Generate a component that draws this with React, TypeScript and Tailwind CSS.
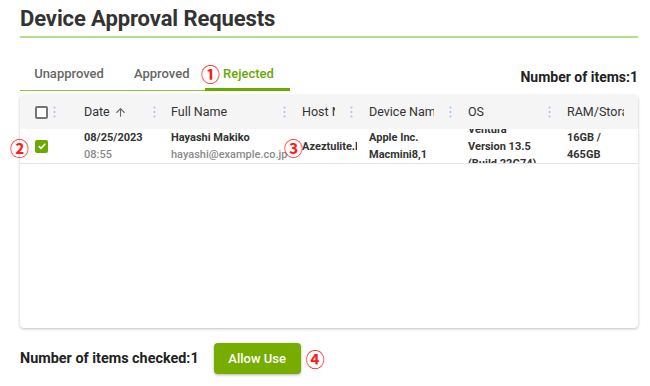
import React from "react";
import { ArrowUp } from "lucide-react";

const Dots = () => (
  <svg width="3" height="12" viewBox="0 0 3 12" className="shrink-0">
    <circle cx="1.5" cy="1.5" r="1" fill="#9cc3ea" />
    <circle cx="1.5" cy="6" r="1" fill="#9cc3ea" />
    <circle cx="1.5" cy="10.5" r="1" fill="#9cc3ea" />
  </svg>
);

const Mark = ({ n, className = "" }: { n: string; className?: string }) => (
  <span
    className={`text-[19px] font-bold leading-none text-[#ff1a1a] ${className}`}
    style={{ fontFamily: '"Noto Sans CJK JP", sans-serif' }}
  >
    {n}
  </span>
);

const HeadCell = ({
  w,
  pl,
  children,
  dots = true,
}: {
  w: string;
  pl: string;
  children: React.ReactNode;
  dots?: boolean;
}) => (
  <div className={`${w} ${pl} flex h-full min-w-0 items-center pr-[5px]`}>
    <div className={`flex min-w-0 flex-1 items-center overflow-hidden whitespace-nowrap ${dots ? "mr-[15px]" : "mr-[9px]"}`}>
      {children}
    </div>
    {dots && <Dots />}
  </div>
);

export default function App() {
  return (
    <div
      className="w-[650px] h-[386px] bg-white pl-[20px] pr-[12px] text-[#333]"
      style={{ fontFamily: "Roboto, sans-serif" }}
    >
      <div className="border-b-2 border-[#b7dc8e] pt-[6px] pb-[4px]">
        <h1 className="text-[22px] font-bold leading-[26px] tracking-[-0.1px] text-[#333]">Device Approval Requests</h1>
      </div>

      <div className="mt-[19px] flex items-end justify-between">
        <div className="flex h-[34px] w-[270px] items-stretch border-b border-[#8cc43c] text-[13px] font-medium">
          <div className="flex w-[100px] items-center justify-center pr-[2px] text-[#666]">Unapproved</div>
          <div className="flex w-[72px] items-center pl-[14px] text-[#666]">Approved</div>
          <div className="relative flex flex-1 items-center pl-[9px] text-[#6aaa00]">
            <Mark n="①" className="mr-[3px]" />
            Rejected
            <div className="absolute bottom-[-1px] left-[13px] right-0 h-[3px] bg-[#6aaa00]" />
          </div>
        </div>
        <div className="mb-[3px] text-[14px] font-bold text-[#222]">Number of items:1</div>
      </div>

      <div className="relative mt-[4px] h-[233px] rounded-[4px] bg-white shadow-[0_1px_3px_rgba(0,0,0,0.25)]">
        <div className="flex h-[34px] items-center overflow-hidden rounded-t-[4px] bg-[#f5f5f5] text-[12.5px] text-[#333]">
          <div className="flex h-full w-[41px] shrink-0 items-center pl-[15px] pr-[5px]">
            <div className="h-[13px] w-[13px] rounded-[2px] border-2 border-[#757575] bg-white" />
            <div className="ml-auto">
              <Dots />
            </div>
          </div>
          <HeadCell w="w-[100px] shrink-0" pl="pl-[23px]">
            Date <ArrowUp size={13} strokeWidth={2} className="ml-[4px] shrink-0 text-[#666]" />
          </HeadCell>
          <HeadCell w="w-[130px] shrink-0" pl="pl-[10px]">Full Name</HeadCell>
          <HeadCell w="w-[67px] shrink-0" pl="pl-[11px]">Host Name</HeadCell>
          <HeadCell w="w-[99px] shrink-0" pl="pl-[11px]">Device Name</HeadCell>
          <HeadCell w="w-[99px] shrink-0" pl="pl-[11px]">OS</HeadCell>
          <HeadCell w="flex-1" pl="pl-[11px]" dots={false}>RAM/Storage</HeadCell>
        </div>

        <div className="flex h-[35px] items-center overflow-hidden border-b border-[#e4e4e4] text-[11px] font-bold leading-[17px] text-[#333]">
          <div className="flex w-[41px] shrink-0 items-center pl-[15px]">
            <div className="flex h-[13px] w-[13px] items-center justify-center rounded-[2px] bg-[#6aaa00]">
              <svg width="10" height="10" viewBox="0 0 10 10">
                <path d="M1.8 5.2 L4 7.3 L8.3 2.8" stroke="white" strokeWidth="1.6" fill="none" />
              </svg>
            </div>
          </div>
          <div className="w-[100px] shrink-0 pl-[23px]">
            <div>08/25/2023</div>
            <div className="font-medium text-[#8a8a8a]">08:55</div>
          </div>
          <div className="w-[130px] shrink-0 whitespace-nowrap pl-[10px]">
            <div>Hayashi Makiko</div>
            <div className="font-medium text-[#8a8a8a]">hayashi@example.co.jp</div>
          </div>
          <div className="w-[67px] shrink-0 overflow-hidden whitespace-nowrap pl-[11px] pr-[1px]">
            <div className="overflow-hidden">Azeztulite.local</div>
          </div>
          <div className="w-[99px] shrink-0 pl-[11px]">
            <div>Apple Inc.</div>
            <div>Macmini8,1</div>
          </div>
          <div className="flex h-full w-[99px] shrink-0 flex-col justify-center overflow-hidden pl-[11px]">
            <div>Ventura</div>
            <div>Version 13.5</div>
            <div>(Build 22G74)</div>
          </div>
          <div className="min-w-0 flex-1 pl-[11px]">
            <div>16GB /</div>
            <div>465GB</div>
          </div>
        </div>

        <Mark n="②" className="absolute left-[-10px] top-[43px]" />
        <Mark n="③" className="absolute left-[264px] top-[43px]" />
      </div>

      <div className="mt-[15px] flex items-center">
        <div className="text-[14.4px] font-bold text-[#222]">Number of items checked:1</div>
        <button className="ml-[15px] h-[31px] w-[87px] rounded-[4px] bg-[#76ad00] text-[13px] font-medium text-white shadow-[0_1px_3px_rgba(0,0,0,0.3)]">
          Allow Use
        </button>
        <Mark n="④" className="ml-[5px]" />
      </div>
    </div>
  );
}
